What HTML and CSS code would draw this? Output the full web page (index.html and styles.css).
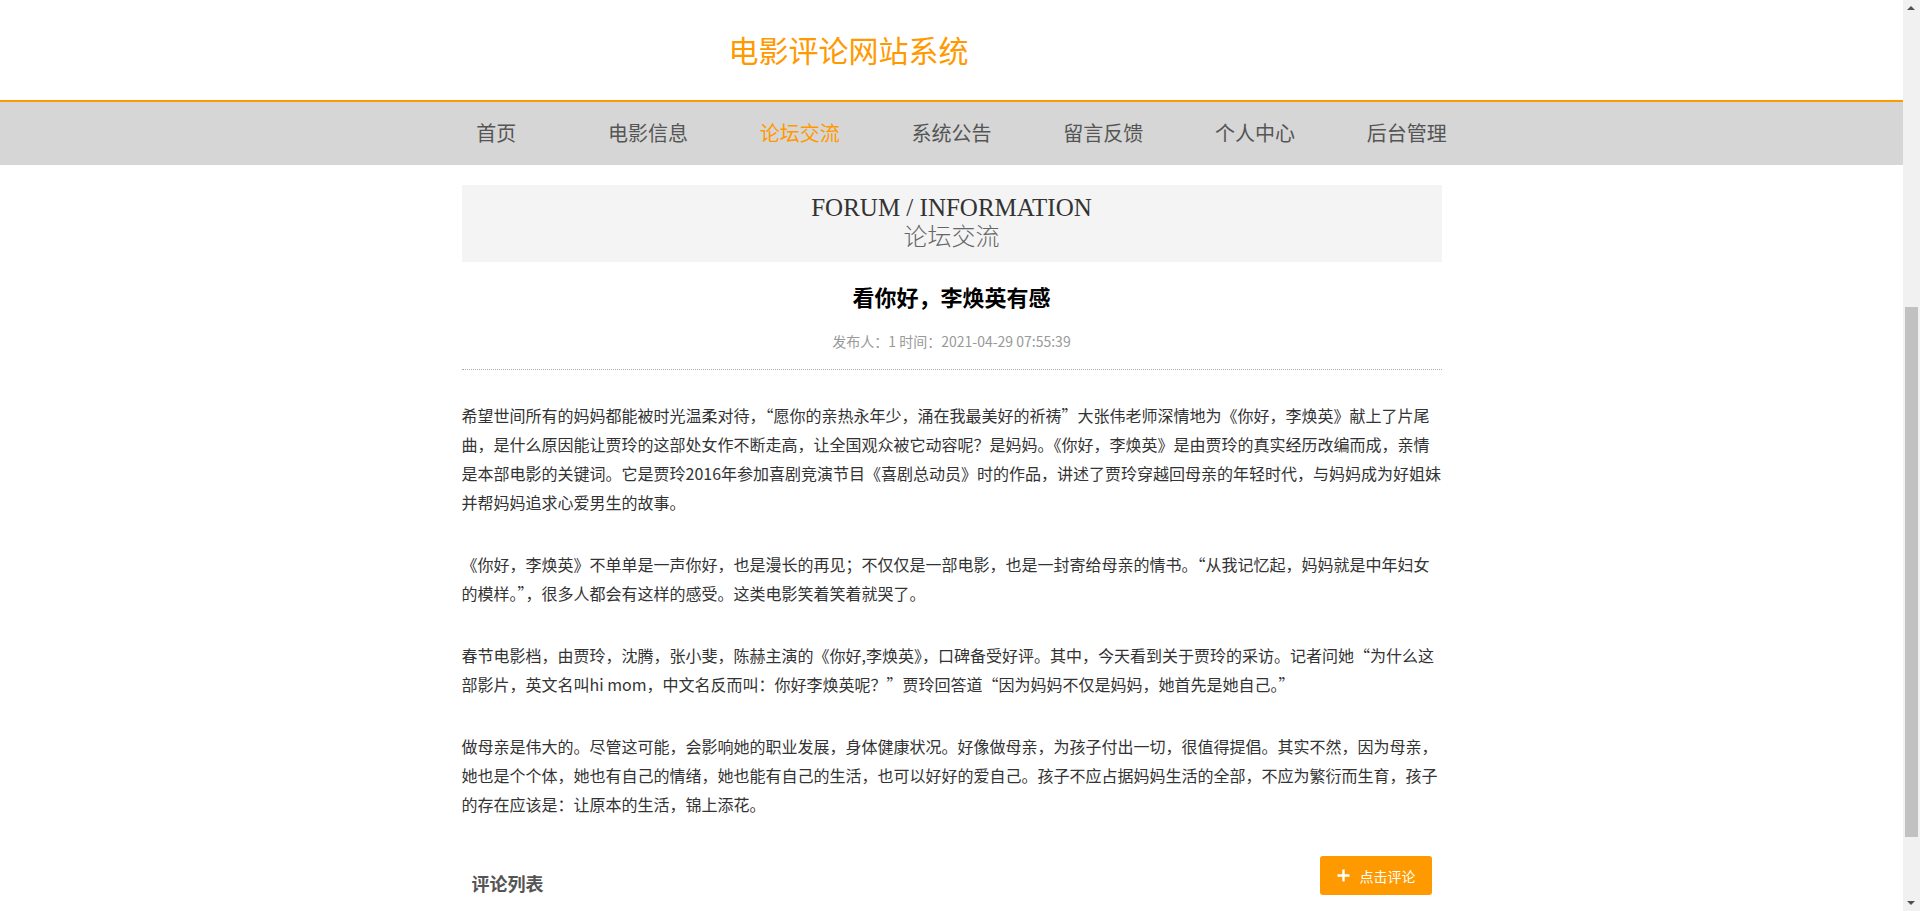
FILE: index.html
```html
<!DOCTYPE html>
<html lang="zh-CN">
<head>
  <meta charset="UTF-8" />
  <title>论坛交流 - 电影评论网站系统</title>
  <link rel="stylesheet" href="styles.css">
</head>
<body>

<header class="top">
  <div class="top-inner">
    <h1 class="site-title">电影评论网站系统</h1>
  </div>
</header>

<nav class="nav">
  <ul>
    <li><a href="#">首页</a></li>
    <li><a href="#">电影信息</a></li>
    <li><a href="#" class="active">论坛交流</a></li>
    <li><a href="#">系统公告</a></li>
    <li><a href="#">留言反馈</a></li>
    <li><a href="#">个人中心</a></li>
    <li><a href="#">后台管理</a></li>
  </ul>
</nav>

<div class="main">

  <div class="banner">
    <div class="banner-en">FORUM / INFORMATION</div>
    <div class="banner-cn">论坛交流</div>
  </div>

  <h2 class="post-title">看你好，李焕英有感</h2>
  <div class="post-meta">发布人：1 时间：2021-04-29 07:55:39</div>

  <div class="article">
    <p>希望世间所有的妈妈都能被时光温柔对待，“愿你的亲热永年少，涌在我最美好的祈祷”大张伟老师深情地为《你好，李焕英》献上了片尾曲，是什么原因能让贾玲的这部处女作不断走高，让全国观众被它动容呢？是妈妈。《你好，李焕英》是由贾玲的真实经历改编而成，亲情是本部电影的关键词。它是贾玲2016年参加喜剧竞演节目《喜剧总动员》时的作品，讲述了贾玲穿越回母亲的年轻时代，与妈妈成为好姐妹并帮妈妈追求心爱男生的故事。</p>
    <p>《你好，李焕英》不单单是一声你好，也是漫长的再见；不仅仅是一部电影，也是一封寄给母亲的情书。“从我记忆起，妈妈就是中年妇女的模样。”，很多人都会有这样的感受。这类电影笑着笑着就哭了。</p>
    <p>春节电影档，由贾玲，沈腾，张小斐，陈赫主演的《你好,李焕英》，口碑备受好评。其中，今天看到关于贾玲的采访。记者问她“为什么这部影片，英文名叫hi mom，中文名反而叫：你好李焕英呢？”贾玲回答道“因为妈妈不仅是妈妈，她首先是她自己。”</p>
    <p>做母亲是伟大的。尽管这可能，会影响她的职业发展，身体健康状况。好像做母亲，为孩子付出一切，很值得提倡。其实不然，因为母亲，她也是个个体，她也有自己的情绪，她也能有自己的生活，也可以好好的爱自己。孩子不应占据妈妈生活的全部，不应为繁衍而生育，孩子的存在应该是：让原本的生活，锦上添花。</p>
  </div>

  <div class="comment-head">
    <h3>评论列表</h3>
    <button class="btn-comment">
      <svg width="13" height="13" viewBox="0 0 13 13"><path d="M6.5 0.5v12M0.5 6.5h12" stroke="#fff" stroke-width="2.4" fill="none"/></svg>
      点击评论
    </button>
  </div>

</div>

<!-- window scrollbar, page is scrolled down -->
<div class="scrollbar">
  <span class="sb-arrow sb-up"></span>
  <div class="sb-thumb"></div>
  <span class="sb-arrow sb-down"></span>
</div>

</body>
</html>
```

FILE: styles.css
```css
body { margin: 0 17px 0 0; padding: 0; font-family: "Microsoft YaHei", "Noto Sans CJK SC", sans-serif; color: #333; background: #fff; }
ul { list-style: none; margin: 0; padding: 0; }
a { text-decoration: none; }

.top { height: 100px; border-bottom: 2px solid #ff9900; }
.top-inner { width: 980px; margin: 0 auto; }
.site-title { margin: 0 0 0 267px; font-size: 30px; font-weight: normal; line-height: 98px; color: #ff9900; }

.nav { background: #d6d6d6; height: 63px; }
.nav ul { display: flex; width: 1062px; margin: 0 auto; }
.nav li { flex: 1; text-align: center; }
.nav a { display: block; line-height: 62px; font-size: 20px; color: #555; }
.nav a.active, .nav a:hover { color: #ff9900; }

.main { width: 980px; margin: 20px auto 0; padding-bottom: 16px; }

.banner { background: #f4f4f4; height: 77px; padding-top: 9px; box-sizing: border-box; text-align: center; font-family: "Liberation Serif", "Noto Sans CJK SC", serif; }
.banner-en { font-size: 25px; line-height: 28px; color: #333; }
.banner-cn { font-size: 24px; line-height: 30px; color: #666; font-weight: 300; }

.post-title { margin: 19px 0 0; text-align: center; font-size: 22px; line-height: 30px; color: #000; }
.post-meta { margin-top: 20px; text-align: center; font-size: 14px; line-height: 20px; color: #999; }

.article { margin-top: 18px; border-top: 1px dotted #aaa; padding-top: 31px; }
.article p { margin: 0 0 33px; font-size: 16px; line-height: 29px; color: #333; }
.article p:last-child { margin-bottom: 0; }

.comment-head { display: flex; justify-content: space-between; align-items: flex-end; margin-top: 37px; padding: 0 10px; }
.comment-head h3 { margin: 0; font-size: 18px; line-height: 24px; color: #555; }
.btn-comment { display: flex; align-items: center; gap: 10px; height: 39px; padding: 0 16px 0 17px; border: none; border-radius: 3px; background: #ff9900; color: #fff; font-family: inherit; font-size: 14px; cursor: pointer; }
.btn-comment:hover { background: #f08c00; }

.scrollbar { position: fixed; top: 0; right: 0; width: 17px; height: 100%; background: #f1f1f1; }
.sb-thumb { position: absolute; left: 2px; right: 2px; top: 307px; height: 530px; background: #c1c1c1; }
.sb-arrow { position: absolute; left: 4px; width: 0; height: 0; border-left: 4px solid transparent; border-right: 4px solid transparent; }
.sb-up { top: 6px; border-bottom: 4px solid #505050; }
.sb-down { bottom: 6px; border-top: 4px solid #505050; }
```
